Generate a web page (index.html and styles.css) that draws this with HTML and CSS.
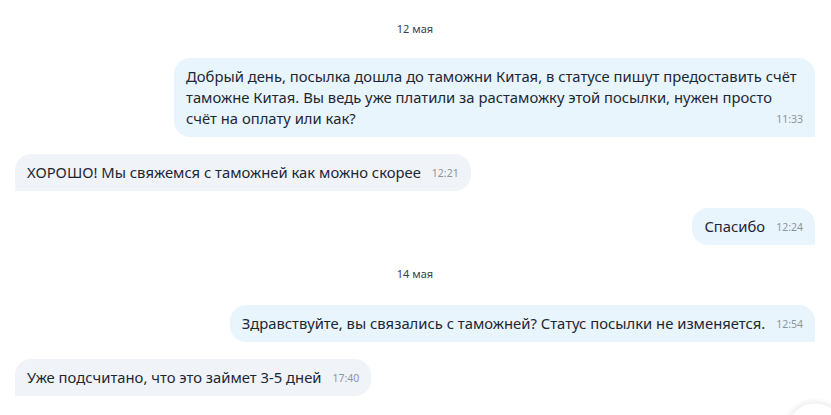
FILE: index.html
```html
<!DOCTYPE html>
<html lang="ru">
<head>
<meta charset="utf-8">
<link rel="stylesheet" href="styles.css">
</head>
<body>
<div class="chat">
  <div class="date date-first">12 мая</div>
  <div class="msg out">
    <div class="bubble">Добрый день, посылка дошла до таможни Китая, в статусе пишут предоставить счёт таможне Китая. Вы ведь уже платили за растаможку этой посылки, нужен просто<br>счёт на оплату или как?<span class="time">11:33</span></div>
  </div>
  <div class="msg in">
    <div class="bubble">ХОРОШО! Мы свяжемся с таможней как можно скорее<span class="time">12:21</span></div>
  </div>
  <div class="msg out">
    <div class="bubble">Спасибо<span class="time">12:24</span></div>
  </div>
  <div class="date">14 мая</div>
  <div class="msg out">
    <div class="bubble">Здравствуйте, вы связались с таможней? Статус посылки не изменяется.<span class="time">12:54</span></div>
  </div>
  <div class="msg in last">
    <div class="bubble">Уже подсчитано, что это займет 3-5 дней<span class="time">17:40</span></div>
  </div>
</div>
<div class="scroll-btn"></div>
</body>
</html>
```
FILE: styles.css
```css
html, body {
  margin: 0;
  padding: 0;
  background: #ffffff;
  height: 100%;
  overflow: hidden;
}
body {
  position: relative;
  font-family: "Noto Sans", "Liberation Sans", sans-serif;
  color: #1d2733;
}
.chat {
  display: flex;
  flex-direction: column;
  padding: 0 16px 0 15px;
}
.date {
  text-align: center;
  font-size: 11px;
  line-height: 16px;
  color: #36414e;
  margin: 4px 0 23px;
}
.date-first {
  margin: 21px 0 21px;
}
.msg {
  display: flex;
  margin-bottom: 17px;
}
.msg.last { margin-bottom: 0; }
.msg.out { justify-content: flex-end; }
.msg.in { justify-content: flex-start; }
.bubble {
  box-sizing: border-box;
  max-width: 641px;
  padding: 8px 12px;
  font-size: 14.8px;
  line-height: 21px;
  border-radius: 16px;
}
.msg.out .bubble {
  background: #e9f5fd;
  border-bottom-right-radius: 0;
}
.msg.in .bubble {
  background: #f0f4f9;
  border-bottom-left-radius: 0;
}
.time {
  float: right;
  margin-left: 11px;
  margin-top: 2px;
  font-size: 10.5px;
  line-height: 18px;
  color: #8c949e;
}
.scroll-btn {
  position: absolute;
  right: 0;
  bottom: 0;
  width: 50px;
  height: 18px;
  background: radial-gradient(circle at 34px 34px, #ffffff 0, #ffffff 27px, rgba(0,0,0,0.05) 28px, rgba(0,0,0,0) 34px);
}
```
